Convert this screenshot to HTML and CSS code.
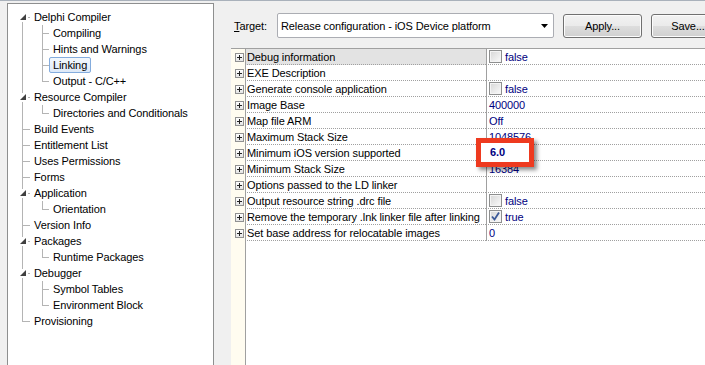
FILE: index.html
```html
<!DOCTYPE html>
<html lang="en">
<head>
    <meta charset="UTF-8">
    <meta name="viewport" content="width=device-width, initial-scale=1.0">
    <title>Project Options - Linking</title>
    <link rel="stylesheet" href="styles.css">
</head>
<body>
    <div class="frame">
        <div class="tree">
            <div class="node"><span class="twig first"><i class="v"></i><i class="h"></i><svg class="tri" width="9" height="9" viewBox="0 0 9 9"><path d="M7 1 L7 7 L1 7 Z" fill="#404040"/></svg></span><span class="label">Delphi Compiler</span></div>
            <div class="node"><span class="twig"><i class="v"></i></span><span class="twig sub"><i class="v"></i><i class="h"></i></span><span class="label">Compiling</span></div>
            <div class="node"><span class="twig"><i class="v"></i></span><span class="twig sub"><i class="v"></i><i class="h"></i></span><span class="label">Hints and Warnings</span></div>
            <div class="node"><span class="twig"><i class="v"></i></span><span class="twig sub"><i class="v"></i><i class="h"></i></span><span class="label selected">Linking</span></div>
            <div class="node"><span class="twig"><i class="v"></i></span><span class="twig sub last"><i class="v"></i><i class="h"></i></span><span class="label">Output - C/C++</span></div>
            <div class="node"><span class="twig"><i class="v"></i><i class="h"></i><svg class="tri" width="9" height="9" viewBox="0 0 9 9"><path d="M7 1 L7 7 L1 7 Z" fill="#404040"/></svg></span><span class="label">Resource Compiler</span></div>
            <div class="node"><span class="twig"><i class="v"></i></span><span class="twig sub last"><i class="v"></i><i class="h"></i></span><span class="label">Directories and Conditionals</span></div>
            <div class="node"><span class="twig"><i class="v"></i><i class="h"></i></span><span class="label">Build Events</span></div>
            <div class="node"><span class="twig"><i class="v"></i><i class="h"></i></span><span class="label">Entitlement List</span></div>
            <div class="node"><span class="twig"><i class="v"></i><i class="h"></i></span><span class="label">Uses Permissions</span></div>
            <div class="node"><span class="twig"><i class="v"></i><i class="h"></i></span><span class="label">Forms</span></div>
            <div class="node"><span class="twig"><i class="v"></i><i class="h"></i><svg class="tri" width="9" height="9" viewBox="0 0 9 9"><path d="M7 1 L7 7 L1 7 Z" fill="#404040"/></svg></span><span class="label">Application</span></div>
            <div class="node"><span class="twig"><i class="v"></i></span><span class="twig sub last"><i class="v"></i><i class="h"></i></span><span class="label">Orientation</span></div>
            <div class="node"><span class="twig"><i class="v"></i><i class="h"></i></span><span class="label">Version Info</span></div>
            <div class="node"><span class="twig"><i class="v"></i><i class="h"></i><svg class="tri" width="9" height="9" viewBox="0 0 9 9"><path d="M7 1 L7 7 L1 7 Z" fill="#404040"/></svg></span><span class="label">Packages</span></div>
            <div class="node"><span class="twig"><i class="v"></i></span><span class="twig sub last"><i class="v"></i><i class="h"></i></span><span class="label">Runtime Packages</span></div>
            <div class="node"><span class="twig"><i class="v"></i><i class="h"></i><svg class="tri" width="9" height="9" viewBox="0 0 9 9"><path d="M7 1 L7 7 L1 7 Z" fill="#404040"/></svg></span><span class="label">Debugger</span></div>
            <div class="node"><span class="twig"><i class="v"></i></span><span class="twig sub"><i class="v"></i><i class="h"></i></span><span class="label">Symbol Tables</span></div>
            <div class="node"><span class="twig"><i class="v"></i></span><span class="twig sub last"><i class="v"></i><i class="h"></i></span><span class="label">Environment Block</span></div>
            <div class="node"><span class="twig last"><i class="v"></i><i class="h"></i></span><span class="label">Provisioning</span></div>
        </div>

        <div class="pane">
            <div class="toolbar">
                <span class="target-label"><u>T</u>arget:</span>
                <div class="combo">
                    <span class="combo-text">Release configuration - iOS Device platform</span>
                    <svg class="combo-arrow" width="7" height="4" viewBox="0 0 7 4"><path d="M0 0 H7 L3.5 4 Z" fill="#000"/></svg>
                </div>
                <button class="btn">Apply...</button>
                <button class="btn btn-save">Save...</button>
            </div>

            <div class="props">
                <div class="prop current"><span class="gutter"><span class="plus"></span></span><span class="name">Debug information</span><span class="value"><span class="check"></span>false</span></div>
                <div class="prop"><span class="gutter"><span class="plus"></span></span><span class="name">EXE Description</span><span class="value"></span></div>
                <div class="prop"><span class="gutter"><span class="plus"></span></span><span class="name">Generate console application</span><span class="value"><span class="check"></span>false</span></div>
                <div class="prop"><span class="gutter"><span class="plus"></span></span><span class="name">Image Base</span><span class="value">400000</span></div>
                <div class="prop"><span class="gutter"><span class="plus"></span></span><span class="name">Map file ARM</span><span class="value">Off</span></div>
                <div class="prop"><span class="gutter"><span class="plus"></span></span><span class="name">Maximum Stack Size</span><span class="value">1048576</span></div>
                <div class="prop"><span class="gutter"><span class="plus"></span></span><span class="name">Minimum iOS version supported</span><span class="value"><span class="callout">6.0</span></span></div>
                <div class="prop"><span class="gutter"><span class="plus"></span></span><span class="name">Minimum Stack Size</span><span class="value">16384</span></div>
                <div class="prop"><span class="gutter"><span class="plus"></span></span><span class="name">Options passed to the LD linker</span><span class="value"></span></div>
                <div class="prop"><span class="gutter"><span class="plus"></span></span><span class="name">Output resource string .drc file</span><span class="value"><span class="check"></span>false</span></div>
                <div class="prop"><span class="gutter"><span class="plus"></span></span><span class="name">Remove the temporary .lnk linker file after linking</span><span class="value"><span class="check"><svg width="11" height="11" viewBox="0 0 11 11"><path d="M2 5.5 L4.5 8.5 L9 1.5" fill="none" stroke="#3b5998" stroke-width="1.8"/></svg></span>true</span></div>
                <div class="prop"><span class="gutter"><span class="plus"></span></span><span class="name">Set base address for relocatable images</span><span class="value">0</span></div>
            </div>
        </div>
    </div>
</body>
</html>
```

FILE: styles.css
```css
body {
    margin: 0;
    background: #f0f0f0;
    font-family: "Liberation Sans", Arial, sans-serif;
    font-size: 11px;
    letter-spacing: -0.1px;
    color: #000;
    overflow: hidden;
    height: 365px;
}
.frame {
    display: flex;
    height: 364px;
    border-top: 1px solid #a9b1bb;
}
.tree {
    flex: none;
    width: 207px;
    height: 400px;
    margin: 2px 0 0 7px;
    padding-top: 5px;
    background: #fff;
    border: 1px solid #8e8f8f;
    box-sizing: border-box;
}
.node {
    display: flex;
    height: 16px;
    align-items: center;
}

/* tree guide lines */
.twig {
    display: block;
    position: relative;
    flex: none;
    width: 22px;
    height: 16px;
}
.twig.sub {
    width: 19px;
}
.twig .v {
    display: block;
    position: absolute;
    left: 14px;
    top: 0;
    width: 1px;
    height: 16px;
    background: #b4b4b4;
}
.twig .h {
    display: block;
    position: absolute;
    left: 15px;
    top: 8px;
    width: 7px;
    height: 1px;
    background: #b4b4b4;
}
.twig.sub .v {
    left: 12px;
}
.twig.sub .h {
    left: 13px;
    width: 6px;
}
.twig.first .v {
    top: 8px;
    height: 8px;
}
.twig.last .v {
    height: 9px;
}
.tri {
    position: absolute;
    left: 11px;
    top: 4px;
    background: #fff;
}
.label {
    padding: 0 3px;
    line-height: 14px;
    border: 1px solid transparent;
    border-radius: 2px;
    white-space: nowrap;
}
.label.selected {
    border-color: #84acdd;
    background: linear-gradient(#f3f8fd, #dde9f8);
}

.pane {
    flex: 1;
    display: flex;
    flex-direction: column;
    padding: 12px 0 0 17px;
    min-width: 0;
}
.toolbar {
    display: flex;
    align-items: center;
    height: 25px;
    padding-left: 3px;
    white-space: nowrap;
}
.target-label {
    width: 43px;
    flex: none;
}
.combo {
    flex: none;
    display: flex;
    align-items: center;
    justify-content: space-between;
    width: 277px;
    height: 25px;
    box-sizing: border-box;
    padding: 0 5px 0 3px;
    background: #fff;
    border: 1px solid #abadb3;
    border-radius: 2px;
}
.btn {
    flex: none;
    width: 79px;
    height: 24px;
    margin-left: 9px;
    margin-top: 1px;
    padding: 0;
    font: inherit;
    letter-spacing: inherit;
    color: #000;
    border: 1px solid #707070;
    border-radius: 3px;
    background: linear-gradient(#f2f2f2 0%, #ebebeb 48%, #dddddd 52%, #cfcfcf 100%);
    box-shadow: inset 0 0 0 1px #fcfcfc;
}
.btn-save {
    width: 74px;
}

.props {
    flex: 1;
    margin-top: 10px;
    border-top: 1px solid #a0a0a0;
    background: linear-gradient(to right, #fffcf0 14px, #a0a0a0 14px, #a0a0a0 15px, #fff 15px);
}
.prop {
    display: grid;
    grid-template-columns: 14px 241px 1fr;
    height: 16px;
}
.gutter {
    display: flex;
    align-items: center;
    padding-left: 4px;
}
.plus {
    width: 9px;
    height: 9px;
    box-sizing: border-box;
    border: 1px solid #919191;
    background:
        linear-gradient(#222, #222) center / 5px 1px no-repeat,
        linear-gradient(#222, #222) center / 1px 5px no-repeat,
        linear-gradient(#fff, #e4e4e4);
}
.name,
.value {
    display: flex;
    align-items: center;
    border-left: 1px solid #a0a0a0;
    border-bottom: 1px dotted #a0a0a0;
    white-space: nowrap;
    overflow: hidden;
}
.name {
    padding-left: 1px;
}
.value {
    position: relative;
    overflow: visible;
    padding-left: 2px;
    color: #000080;
}
.prop.current .name {
    background: #e3e3e3;
}
.check {
    display: flex;
    align-items: center;
    justify-content: center;
    width: 13px;
    height: 13px;
    box-sizing: border-box;
    margin-right: 3px;
    border: 1px solid #8e8f8f;
    background: linear-gradient(135deg, #d6d6d6, #fbfbfb);
    box-shadow: inset 0 0 0 1px #f4f4f4;
}
.callout {
    position: absolute;
    left: -11px;
    top: -7px;
    width: 58px;
    height: 29px;
    box-sizing: border-box;
    padding-left: 9px;
    line-height: 19px;
    font-weight: bold;
    background: #fff;
    border: 5px solid #ee3a1f;
    box-shadow: 3px 3px 4px rgba(0, 0, 0, 0.45);
    z-index: 2;
}
```
